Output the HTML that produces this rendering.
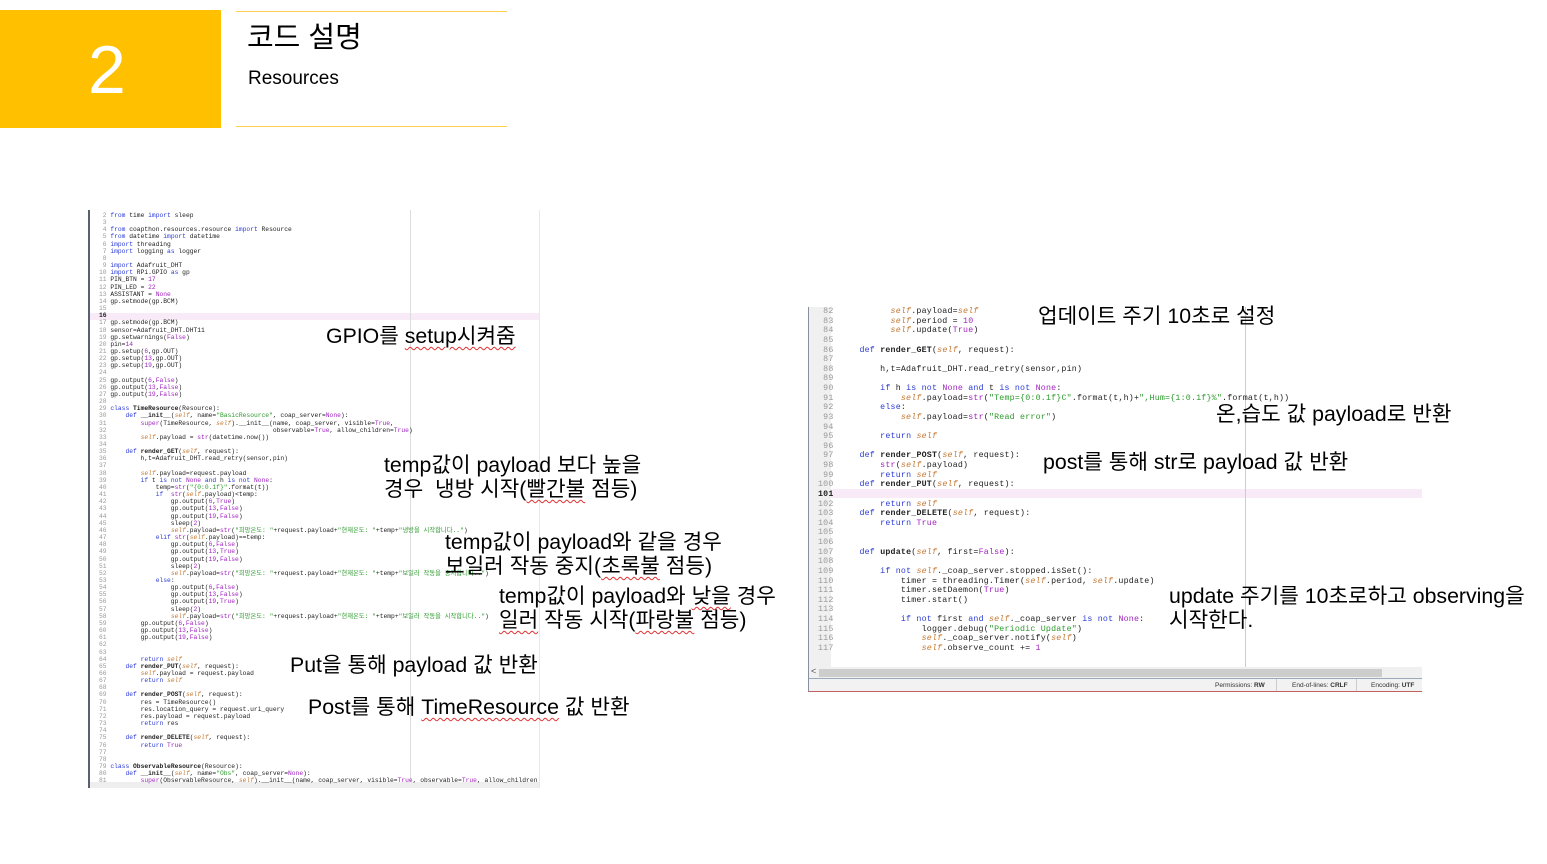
<!DOCTYPE html>
<html><head><meta charset="utf-8"><style>
*{margin:0;padding:0;box-sizing:border-box}
body{width:1547px;height:864px;background:#fff;position:relative;overflow:hidden;font-family:"Liberation Sans","Noto Sans CJK KR",sans-serif}
.abs{position:absolute}
.code{position:absolute;font-family:"Liberation Mono","DejaVu Sans Mono",monospace;white-space:pre;color:#222}
.k{color:#2b3bd6}.s{color:#c47a35;font-style:italic}.g{color:#2e9a2e}.p{color:#a023c0}.b{font-weight:bold}
.ln{color:#999}
.note{position:absolute;font-size:21.3px;color:#000;white-space:nowrap;line-height:24px}
.wv{text-decoration:underline wavy #e03030;text-decoration-thickness:1px;text-underline-offset:3px}
</style></head><body>
<div class="abs" style="left:0;top:10px;width:221px;height:118px;background:#FFC000"></div>
<div class="abs" style="left:88px;top:27px;font-size:68px;color:#fff;font-weight:300;line-height:86px">2</div>
<div class="abs" style="left:236px;top:11px;width:271px;height:1px;background:#FFD050"></div>
<div class="abs" style="left:236px;top:126px;width:271px;height:1px;background:#FFD050"></div>
<div class="abs" style="left:247px;top:19px;font-size:29px;line-height:38px;color:#000">코드 설명</div>
<div class="abs" style="left:248px;top:67px;font-size:19px;line-height:24px;color:#000">Resources</div>

<!-- left panel -->
<div class="abs" style="left:88px;top:210px;width:452px;height:578px;background:#fff;overflow:hidden;border-left:2px solid #5a6070;border-right:1px solid #e8e8e8">
<div class="abs" style="left:0;top:103px;width:452px;height:7px;background:#f8eaf6"></div>
<div class="abs" style="left:320px;top:0;width:1px;height:578px;background:#ddd"></div>
<div class="abs" style="left:0;top:572px;width:452px;height:6px;background:#eee"></div>
<pre class="code" style="left:9px;top:2px;font-size:6.3px;line-height:7.15px"><span class="ln"> 2</span> <span class="k">from</span> time <span class="k">import</span> sleep
<span class="ln"> 3</span>
<span class="ln"> 4</span> <span class="k">from</span> coapthon.resources.resource <span class="k">import</span> Resource
<span class="ln"> 5</span> <span class="k">from</span> datetime <span class="k">import</span> datetime
<span class="ln"> 6</span> <span class="k">import</span> threading
<span class="ln"> 7</span> <span class="k">import</span> logging <span class="k">as</span> logger
<span class="ln"> 8</span>
<span class="ln"> 9</span> <span class="k">import</span> Adafruit_DHT
<span class="ln">10</span> <span class="k">import</span> RPi.GPIO <span class="k">as</span> gp
<span class="ln">11</span> PIN_BTN = <span class="p">17</span>
<span class="ln">12</span> PIN_LED = <span class="p">22</span>
<span class="ln">13</span> ASSISTANT = <span class="p">None</span>
<span class="ln">14</span> gp.setmode(gp.BCM)
<span class="ln">15</span>
<b>16</b>
<span class="ln">17</span> gp.setmode(gp.BCM)
<span class="ln">18</span> sensor=Adafruit_DHT.DHT11
<span class="ln">19</span> gp.setwarnings(<span class="p">False</span>)
<span class="ln">20</span> pin=<span class="p">14</span>
<span class="ln">21</span> gp.setup(<span class="p">6</span>,gp.OUT)
<span class="ln">22</span> gp.setup(<span class="p">13</span>,gp.OUT)
<span class="ln">23</span> gp.setup(<span class="p">19</span>,gp.OUT)
<span class="ln">24</span>
<span class="ln">25</span> gp.output(<span class="p">6</span>,<span class="p">False</span>)
<span class="ln">26</span> gp.output(<span class="p">13</span>,<span class="p">False</span>)
<span class="ln">27</span> gp.output(<span class="p">19</span>,<span class="p">False</span>)
<span class="ln">28</span>
<span class="ln">29</span> <span class="k">class</span> <b>TimeResource</b>(Resource):
<span class="ln">30</span>     <span class="k">def</span> <b>__init__</b>(<span class="s">self</span>, name=<span class="g">"BasicResource"</span>, coap_server=<span class="p">None</span>):
<span class="ln">31</span>         <span class="p">super</span>(TimeResource, <span class="s">self</span>).__init__(name, coap_server, visible=<span class="p">True</span>,
<span class="ln">32</span>                                            observable=<span class="p">True</span>, allow_children=<span class="p">True</span>)
<span class="ln">33</span>         <span class="s">self</span>.payload = <span class="p">str</span>(datetime.now())
<span class="ln">34</span>
<span class="ln">35</span>     <span class="k">def</span> <b>render_GET</b>(<span class="s">self</span>, request):
<span class="ln">36</span>         h,t=Adafruit_DHT.read_retry(sensor,pin)
<span class="ln">37</span>
<span class="ln">38</span>         <span class="s">self</span>.payload=request.payload
<span class="ln">39</span>         <span class="k">if</span> t <span class="k">is not</span> <span class="p">None</span> <span class="k">and</span> h <span class="k">is not</span> <span class="p">None</span>:
<span class="ln">40</span>             temp=<span class="p">str</span>(<span class="g">"{0:0.1f}"</span>.format(t))
<span class="ln">41</span>             <span class="k">if</span>  <span class="p">str</span>(<span class="s">self</span>.payload)&lt;temp:
<span class="ln">42</span>                 gp.output(<span class="p">6</span>,<span class="p">True</span>)
<span class="ln">43</span>                 gp.output(<span class="p">13</span>,<span class="p">False</span>)
<span class="ln">44</span>                 gp.output(<span class="p">19</span>,<span class="p">False</span>)
<span class="ln">45</span>                 sleep(<span class="p">2</span>)
<span class="ln">46</span>                 <span class="s">self</span>.payload=<span class="p">str</span>(<span class="g">"희망온도: "</span>+request.payload+<span class="g">"현재온도: "</span>+temp+<span class="g">"냉방을 시작합니다.."</span>)
<span class="ln">47</span>             <span class="k">elif</span> <span class="p">str</span>(<span class="s">self</span>.payload)==temp:
<span class="ln">48</span>                 gp.output(<span class="p">6</span>,<span class="p">False</span>)
<span class="ln">49</span>                 gp.output(<span class="p">13</span>,<span class="p">True</span>)
<span class="ln">50</span>                 gp.output(<span class="p">19</span>,<span class="p">False</span>)
<span class="ln">51</span>                 sleep(<span class="p">2</span>)
<span class="ln">52</span>                 <span class="s">self</span>.payload=<span class="p">str</span>(<span class="g">"희망온도: "</span>+request.payload+<span class="g">"현재온도: "</span>+temp+<span class="g">"보일러 작동을 중지합니다.."</span>)
<span class="ln">53</span>             <span class="k">else</span>:
<span class="ln">54</span>                 gp.output(<span class="p">6</span>,<span class="p">False</span>)
<span class="ln">55</span>                 gp.output(<span class="p">13</span>,<span class="p">False</span>)
<span class="ln">56</span>                 gp.output(<span class="p">19</span>,<span class="p">True</span>)
<span class="ln">57</span>                 sleep(<span class="p">2</span>)
<span class="ln">58</span>                 <span class="s">self</span>.payload=<span class="p">str</span>(<span class="g">"희망온도: "</span>+request.payload+<span class="g">"현재온도: "</span>+temp+<span class="g">"보일러 작동을 시작합니다.."</span>)
<span class="ln">59</span>         gp.output(<span class="p">6</span>,<span class="p">False</span>)
<span class="ln">60</span>         gp.output(<span class="p">13</span>,<span class="p">False</span>)
<span class="ln">61</span>         gp.output(<span class="p">19</span>,<span class="p">False</span>)
<span class="ln">62</span>
<span class="ln">63</span>
<span class="ln">64</span>         <span class="k">return</span> <span class="s">self</span>
<span class="ln">65</span>     <span class="k">def</span> <b>render_PUT</b>(<span class="s">self</span>, request):
<span class="ln">66</span>         <span class="s">self</span>.payload = request.payload
<span class="ln">67</span>         <span class="k">return</span> <span class="s">self</span>
<span class="ln">68</span>
<span class="ln">69</span>     <span class="k">def</span> <b>render_POST</b>(<span class="s">self</span>, request):
<span class="ln">70</span>         res = TimeResource()
<span class="ln">71</span>         res.location_query = request.uri_query
<span class="ln">72</span>         res.payload = request.payload
<span class="ln">73</span>         <span class="k">return</span> res
<span class="ln">74</span>
<span class="ln">75</span>     <span class="k">def</span> <b>render_DELETE</b>(<span class="s">self</span>, request):
<span class="ln">76</span>         <span class="k">return</span> <span class="p">True</span>
<span class="ln">77</span>
<span class="ln">78</span>
<span class="ln">79</span> <span class="k">class</span> <b>ObservableResource</b>(Resource):
<span class="ln">80</span>     <span class="k">def</span> <b>__init__</b>(<span class="s">self</span>, name=<span class="g">"Obs"</span>, coap_server=<span class="p">None</span>):
<span class="ln">81</span>         <span class="p">super</span>(ObservableResource, <span class="s">self</span>).__init__(name, coap_server, visible=<span class="p">True</span>, observable=<span class="p">True</span>, allow_children</pre>
</div>

<!-- right panel -->
<div class="abs" style="left:808px;top:307px;width:614px;height:385px;background:#fff;overflow:hidden;border-left:1px solid #8a8fa0;border-bottom:1px solid #c06060">
<div class="abs" style="left:0;top:0;width:22px;height:360px;background:#f0f0f0"></div>
<div class="abs" style="left:22px;top:182px;width:592px;height:9px;background:#f8eaf6"></div>
<div class="abs" style="left:436px;top:0;width:1px;height:360px;background:#ccc"></div>
<div class="abs" style="left:0;top:360px;width:614px;height:12px;background:#f0f0f0"></div>
<div class="abs" style="left:10px;top:362px;width:563px;height:8px;background:#cdcdcd"></div>
<div class="abs" style="left:2px;top:359px;font-size:9px;color:#555">&lt;</div>
<div class="abs" style="left:0;top:371px;width:614px;height:1px;background:#9ab"></div>
<div class="abs" style="left:0;top:372px;width:614px;height:13px;background:#f2f2f2;font-size:6.5px;color:#333;line-height:13px">
<span class="abs" style="left:406px">Permissions: <b>RW</b></span>
<span class="abs" style="left:467px;border-left:1px solid #ccc;padding-left:15px;height:13px">End-of-lines: <b>CRLF</b></span>
<span class="abs" style="left:547px;border-left:1px solid #ccc;padding-left:14px">Encoding: <b>UTF</b></span>
</div>
<pre class="code" style="left:9px;top:0;font-size:8.3px;line-height:9.63px;letter-spacing:0.2px"><span class="ln"> 82</span>           <span class="s">self</span>.payload=<span class="s">self</span>
<span class="ln"> 83</span>           <span class="s">self</span>.period = <span class="p">10</span>
<span class="ln"> 84</span>           <span class="s">self</span>.update(<span class="p">True</span>)
<span class="ln"> 85</span>
<span class="ln"> 86</span>     <span class="k">def</span> <b>render_GET</b>(<span class="s">self</span>, request):
<span class="ln"> 87</span>
<span class="ln"> 88</span>         h,t=Adafruit_DHT.read_retry(sensor,pin)
<span class="ln"> 89</span>
<span class="ln"> 90</span>         <span class="k">if</span> h <span class="k">is not</span> <span class="p">None</span> <span class="k">and</span> t <span class="k">is not</span> <span class="p">None</span>:
<span class="ln"> 91</span>             <span class="s">self</span>.payload=<span class="p">str</span>(<span class="g">"Temp={0:0.1f}C"</span>.format(t,h)+<span class="g">",Hum={1:0.1f}%"</span>.format(t,h))
<span class="ln"> 92</span>         <span class="k">else</span>:
<span class="ln"> 93</span>             <span class="s">self</span>.payload=<span class="p">str</span>(<span class="g">"Read error"</span>)
<span class="ln"> 94</span>
<span class="ln"> 95</span>         <span class="k">return</span> <span class="s">self</span>
<span class="ln"> 96</span>
<span class="ln"> 97</span>     <span class="k">def</span> <b>render_POST</b>(<span class="s">self</span>, request):
<span class="ln"> 98</span>         <span class="p">str</span>(<span class="s">self</span>.payload)
<span class="ln"> 99</span>         <span class="k">return</span> <span class="s">self</span>
<span class="ln">100</span>     <span class="k">def</span> <b>render_PUT</b>(<span class="s">self</span>, request):
<b>101</b>
<span class="ln">102</span>         <span class="k">return</span> <span class="s">self</span>
<span class="ln">103</span>     <span class="k">def</span> <b>render_DELETE</b>(<span class="s">self</span>, request):
<span class="ln">104</span>         <span class="k">return</span> <span class="p">True</span>
<span class="ln">105</span>
<span class="ln">106</span>
<span class="ln">107</span>     <span class="k">def</span> <b>update</b>(<span class="s">self</span>, first=<span class="p">False</span>):
<span class="ln">108</span>
<span class="ln">109</span>         <span class="k">if not</span> <span class="s">self</span>._coap_server.stopped.isSet():
<span class="ln">110</span>             timer = threading.Timer(<span class="s">self</span>.period, <span class="s">self</span>.update)
<span class="ln">111</span>             timer.setDaemon(<span class="p">True</span>)
<span class="ln">112</span>             timer.start()
<span class="ln">113</span>
<span class="ln">114</span>             <span class="k">if not</span> first <span class="k">and</span> <span class="s">self</span>._coap_server <span class="k">is not</span> <span class="p">None</span>:
<span class="ln">115</span>                 logger.debug(<span class="g">"Periodic Update"</span>)
<span class="ln">116</span>                 <span class="s">self</span>._coap_server.notify(<span class="s">self</span>)
<span class="ln">117</span>                 <span class="s">self</span>.observe_count += <span class="p">1</span></pre>
</div>

<!-- notes -->
<div class="note" style="left:326px;top:324px">GPIO를 <span class="wv">setup시켜줌</span></div>
<div class="note" style="left:384px;top:453px">temp값이 payload 보다 높을<br>경우&nbsp; 냉방 시작(<span class="wv">빨간불</span> 점등)</div>
<div class="note" style="left:445px;top:530px">temp값이 payload와 같을 경우<br>보일러 작동 중지(<span class="wv">초록불</span> 점등)</div>
<div class="note" style="left:499px;top:584px">temp값이 payload와 <span class="wv">낮을</span> 경우<br><span class="wv">일러</span> 작동 시작(<span class="wv">파랑불</span> 점등)</div>
<div class="note" style="left:290px;top:653px">Put을 통해 payload 값 반환</div>
<div class="note" style="left:308px;top:695px">Post를 통해 <span class="wv">TimeResource</span> 값 반환</div>
<div class="note" style="left:1038px;top:304px">업데이트 주기 10초로 설정</div>
<div class="note" style="left:1216px;top:402px">온,습도 값 payload로 반환</div>
<div class="note" style="left:1043px;top:450px">post를 통해 str로 payload 값 반환</div>
<div class="note" style="left:1169px;top:584px">update 주기를 10초로하고 observing을<br>시작한다.</div>
</body></html>
